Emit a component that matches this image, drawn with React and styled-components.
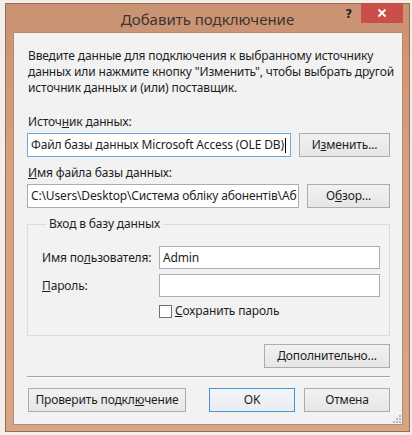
import styled, { createGlobalStyle } from "styled-components";

const GlobalStyle = createGlobalStyle`
  html, body {
    margin: 0;
    padding: 0;
  }
  body {
    background: #f3eee9;
    font-family: "Noto Sans", "Open Sans", sans-serif;
    font-size: 12px;
    line-height: 16px;
    letter-spacing: -0.15px;
    color: #1e1e1e;
  }
`;

function App() {
  return (
    <Page>
      <GlobalStyle />
      <Window>
        <TitleBar>
          <span />
          <Title>Добавить подключение</Title>
          <Controls>
            <HelpGlyph>?</HelpGlyph>
            <CloseButton>
              <svg width="10" height="10" viewBox="0 0 10 10">
                <path d="M1.5 1.5 L8.5 8.5 M8.5 1.5 L1.5 8.5" stroke="#fff" strokeWidth="1.8" />
              </svg>
            </CloseButton>
          </Controls>
        </TitleBar>

        <Client>
          <Description>
            Введите данные для подключения к выбранному источнику
            <br />
            данных или нажмите кнопку "Изменить", чтобы выбрать другой
            <br />
            источник данных и (или) поставщик.
          </Description>

          <FieldLabel $top={18}>
            Источ<u>н</u>ик данных:
          </FieldLabel>
          <FieldRow>
            <TextBox $focused>
              Файл базы данных Microsoft Access (OLE DB)
              <Caret />
            </TextBox>
            <Button $width={91}>
              И<u>з</u>менить...
            </Button>
          </FieldRow>

          <FieldLabel $top={8}>
            <u>И</u>мя файла базы данных:
          </FieldLabel>
          <FieldRow>
            <TextBox>C:\Users\Desktop\Система обліку абонентів\Аб</TextBox>
            <Button $width={83}>
              О<u>б</u>зор...
            </Button>
          </FieldRow>

          <Group>
            <Legend>Вход в базу данных</Legend>
            <LoginRow>
              <LoginLabel>
                Имя по<u>л</u>ьзователя:
              </LoginLabel>
              <TextBox $height={23}>Admin</TextBox>
            </LoginRow>
            <LoginRow>
              <LoginLabel>
                <u>П</u>ароль:
              </LoginLabel>
              <TextBox $height={23} />
            </LoginRow>
            <LoginRow>
              <LoginLabel />
              <CheckLine>
                <CheckBox />
                <span>
                  <u>С</u>охранить пароль
                </span>
              </CheckLine>
            </LoginRow>
          </Group>

          <AdvancedRow>
            <Button $width={126}>
              <u>Д</u>ополнительно...
            </Button>
          </AdvancedRow>

          <Separator />

          <Footer>
            <Button $width={158}>
              Проверить подкл<u>ю</u>чение
            </Button>
            <FooterRight>
              <Button $width={86} $default>
                OK
              </Button>
              <Button $width={86}>Отмена</Button>
            </FooterRight>
          </Footer>

          <Grip>
            <svg width="8" height="8" viewBox="0 0 8 8">
              <g fill="#b5b5b5">
                <rect x="6" y="0" width="2" height="2" />
                <rect x="3" y="3" width="2" height="2" />
                <rect x="6" y="3" width="2" height="2" />
                <rect x="0" y="6" width="2" height="2" />
                <rect x="3" y="6" width="2" height="2" />
                <rect x="6" y="6" width="2" height="2" />
              </g>
            </svg>
          </Grip>
        </Client>
      </Window>
    </Page>
  );
}

export default App;

const Page = styled.div`
  width: 412px;
  height: 435px;
  box-sizing: border-box;
  padding: 3px 2px 3px 5px;
`;

const Window = styled.div`
  width: 405px;
  height: 429px;
  box-sizing: border-box;
  border: 1px solid #9a6c50;
  background: linear-gradient(180deg, #c99272 0%, #d6a283 40%, #d7a587 100%);
  display: flex;
  flex-direction: column;
`;

const TitleBar = styled.div`
  height: 28px;
  flex-shrink: 0;
  display: grid;
  grid-template-columns: 1fr auto 1fr;
  align-items: center;
`;

const Title = styled.div`
  font-size: 15px;
  letter-spacing: 0;
  color: #3b3430;
  padding-top: 1px;
`;

const Controls = styled.div`
  justify-self: end;
  align-self: start;
  display: flex;
  align-items: flex-start;
  margin-top: -1px;
  margin-right: 6px;
`;

const HelpGlyph = styled.span`
  font-family: "DejaVu Sans", sans-serif;
  font-weight: bold;
  font-size: 12px;
  color: #2a2420;
  margin: 3px 9px 0 0;
`;

const CloseButton = styled.div`
  width: 42px;
  height: 20px;
  background: #c9504a;
  display: flex;
  align-items: center;
  justify-content: center;
`;

const Client = styled.div`
  flex: 1;
  margin: 0 6px 6px 7px;
  border: 1px solid #b98a6c;
  background: #f2f2f2;
  padding: 15px 12px 0 13px;
  display: flex;
  flex-direction: column;
  position: relative;
`;

const Description = styled.div`
  white-space: nowrap;
  padding-left: 1px;
`;

const FieldLabel = styled.div`
  margin-top: ${(p) => p.$top}px;
  margin-bottom: 3px;
  padding-left: 1px;
`;

const FieldRow = styled.div`
  display: flex;
  align-items: center;
  gap: 8px;
`;

const TextBox = styled.div`
  flex: 1;
  min-width: 0;
  height: ${(p) => p.$height || 24}px;
  box-sizing: border-box;
  border: 1px solid ${(p) => (p.$focused ? "#6fa6dc" : "#abadb3")};
  background: #fff;
  padding: 0 3px;
  line-height: ${(p) => (p.$height || 24) - 2}px;
  white-space: nowrap;
  overflow: hidden;
`;

const Caret = styled.span`
  display: inline-block;
  width: 1px;
  height: 15px;
  background: #000;
  vertical-align: middle;
  margin-left: 1px;
`;

const Button = styled.div`
  width: ${(p) => p.$width}px;
  height: 24px;
  box-sizing: border-box;
  flex-shrink: 0;
  border: 1px solid ${(p) => (p.$default ? "#4f8fd3" : "#acacac")};
  background: ${(p) =>
    p.$default
      ? "linear-gradient(180deg, #f3f6f9, #e8edf2)"
      : "linear-gradient(180deg, #f1f1f1, #e6e6e6)"};
  display: flex;
  align-items: center;
  justify-content: center;
  white-space: nowrap;
`;

const Group = styled.fieldset`
  margin: 8px 0 0 0;
  padding: 14px 9px 16px 14px;
  border: 1px solid #dcdcdc;
  display: flex;
  flex-direction: column;
  gap: 5px;
`;

const Legend = styled.legend`
  padding: 0 3px;
  margin-left: 4px;
`;

const LoginRow = styled.div`
  display: flex;
  align-items: center;
`;

const LoginLabel = styled.div`
  width: 117px;
  flex-shrink: 0;
`;

const CheckLine = styled.div`
  display: flex;
  align-items: center;
  gap: 3px;
  margin-top: 1px;
`;

const CheckBox = styled.span`
  width: 13px;
  height: 13px;
  box-sizing: border-box;
  border: 1px solid #707070;
  background: #fff;
`;

const AdvancedRow = styled.div`
  display: flex;
  justify-content: flex-end;
  margin-top: 8px;
`;

const Separator = styled.div`
  height: 1px;
  flex-shrink: 0;
  background: #a0a0a0;
  border-bottom: 1px solid #fff;
  margin-top: 8px;
`;

const Footer = styled.div`
  display: flex;
  justify-content: space-between;
  margin-top: 10px;
  padding-left: 1px;
`;

const FooterRight = styled.div`
  display: flex;
  gap: 9px;
`;

const Grip = styled.div`
  position: absolute;
  right: 1px;
  bottom: 1px;
  line-height: 0;
`;
